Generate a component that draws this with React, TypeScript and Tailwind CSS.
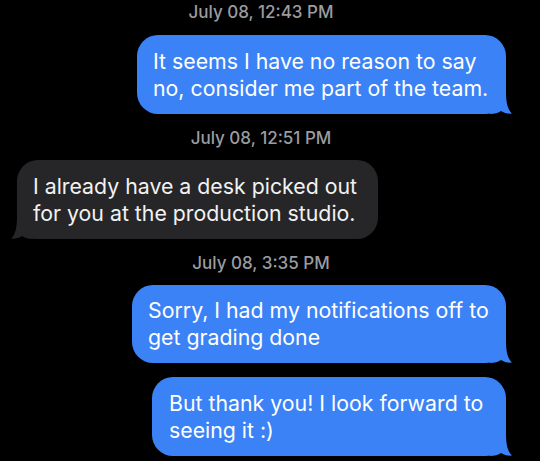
import React from "react";

function TailRight({ color }: { color: string }) {
  return (
    <svg
      className="absolute bottom-0 right-[-6px]"
      width="22"
      height="22"
      viewBox="0 0 22 22"
      fill={color}
    >
      <path d="M0 0 L16 0 C16 10 17.5 17.5 22 21.6 C18 22 14 21 11 19 C8.5 21 4.5 22 0 22 Z" />
    </svg>
  );
}

function TailLeft({ color }: { color: string }) {
  return (
    <svg
      className="absolute bottom-0 left-[-6px]"
      width="22"
      height="22"
      viewBox="0 0 22 22"
      fill={color}
    >
      <path d="M22 0 L6 0 C6 10 4.5 17.5 0 21.6 C4 22 8 21 11 19 C13.5 21 17.5 22 22 22 Z" />
    </svg>
  );
}

function Stamp({ children, className }: { children: React.ReactNode; className?: string }) {
  return (
    <div
      className={
        "flex justify-center pr-[18px] text-[17px] leading-[20px] font-medium text-[#9c9ca0] " +
        (className ?? "")
      }
    >
      {children}
    </div>
  );
}

export default function App() {
  return (
    <div
      className="w-[540px] h-[461px] overflow-hidden bg-black flex flex-col pt-[2px]"
      style={{ fontFamily: "Inter, 'Noto Sans', sans-serif" }}
    >
      <Stamp>July 08, 12:43 PM</Stamp>

      <div className="flex justify-end pr-[34px] mt-[13px]">
        <div className="relative w-[369px] rounded-[21px] bg-[#3b82f6] pl-[16px] pt-[13px] pb-[12px] text-[21.3px] leading-[27px] text-white">
          <span className="relative z-10">
            It seems I have no reason to say
            <br />
            no, consider me part of the team.
          </span>
          <TailRight color="#3b82f6" />
        </div>
      </div>

      <Stamp className="mt-[14px]">July 08, 12:51 PM</Stamp>

      <div className="flex justify-start pl-[17px] mt-[12px]">
        <div className="relative w-[361px] rounded-[21px] bg-[#262628] pl-[16px] pt-[13px] pb-[12px] text-[21.3px] leading-[27px] text-[#f2f2f2]">
          <span className="relative z-10">
            I already have a desk picked out
            <br />
            for you at the production studio.
          </span>
          <TailLeft color="#262628" />
        </div>
      </div>

      <Stamp className="mt-[14px]">July 08, 3:35 PM</Stamp>

      <div className="flex justify-end pr-[34px] mt-[12px]">
        <div className="relative w-[374px] rounded-[21px] bg-[#3b82f6] pl-[16px] pt-[12px] pb-[12px] text-[21.3px] leading-[27px] text-white">
          <span className="relative z-10">
            Sorry, I had my notifications off to
            <br />
            get grading done
          </span>
          <TailRight color="#3b82f6" />
        </div>
      </div>

      <div className="flex justify-end pr-[34px] mt-[14px]">
        <div className="relative w-[354px] rounded-[21px] bg-[#3b82f6] pl-[17px] pt-[13px] pb-[12px] text-[21.3px] leading-[27px] text-white">
          <span className="relative z-10">
            But thank you! I look forward to
            <br />
            seeing it :)
          </span>
          <TailRight color="#3b82f6" />
        </div>
      </div>
    </div>
  );
}
